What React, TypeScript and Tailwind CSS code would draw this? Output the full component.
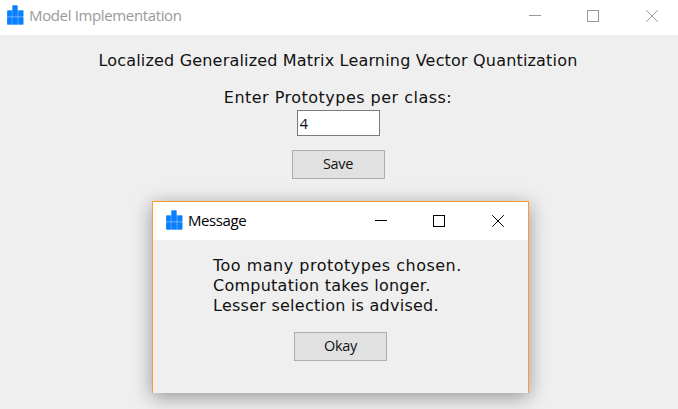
function BlocksIcon() {
  return (
    <svg width="18" height="20" viewBox="0 0 18 20" className="shrink-0" aria-hidden="true">
      <rect x="1" y="5.2" width="16.5" height="14.5" rx="1" fill="#7fbcff" />
      <rect x="6.3" y="0.2" width="5.4" height="11.2" rx="0.9" fill="#0a80ff" />
      <rect x="1.2" y="5.4" width="4.6" height="6" rx="0.6" fill="#0a80ff" />
      <rect x="12.3" y="5.4" width="5" height="6" rx="0.6" fill="#0a80ff" />
      <rect x="1.2" y="12.3" width="4.6" height="7.2" rx="0.6" fill="#0a80ff" />
      <rect x="6.3" y="12.3" width="5.4" height="7.2" rx="0.6" fill="#0a80ff" />
      <rect x="12.3" y="12.3" width="5" height="7.2" rx="0.6" fill="#0a80ff" />
    </svg>
  );
}

function WindowControls() {
  return (
    <svg width="130" height="12" viewBox="0 0 130 12" className="shrink-0" fill="none" stroke="currentColor" shapeRendering="crispEdges" aria-hidden="true">
      <path d="M0 5.5h12" />
      <rect x="58.5" y="0.5" width="11" height="11" />
      <path d="M117.2 0.2l11.6 11.6M128.8 0.2l-11.6 11.6" shapeRendering="auto" />
    </svg>
  );
}

function PushButton({ label }: { label: string }) {
  return (
    <button
      type="button"
      className="flex h-[29px] w-[93px] items-center justify-center border border-[#adadad] bg-[#e1e1e1] font-['Open_Sans',sans-serif] text-[14.5px] leading-none tracking-[-0.35px] text-[#111]"
    >
      {label}
    </button>
  );
}

function MessageDialog() {
  return (
    <section className="absolute top-[201px] left-[152px] h-[192px] w-[377px] border border-b-0 border-[#ff9a2b] bg-[#efefef] shadow-[0_4px_18px_0px_rgba(0,0,0,0.38)]">
      <header className="flex h-[38px] items-center bg-white pl-[12px] text-black">
        <div className="-mt-[2px]">
          <BlocksIcon />
        </div>
        <h2 className="-mt-[3px] ml-[5px] flex-1 font-['Open_Sans',sans-serif] text-[15px] leading-5 tracking-[-0.42px]">Message</h2>
        <div className="mr-[23px]">
          <WindowControls />
        </div>
      </header>
      <div className="flex flex-col items-center pt-[16px]">
        <div className="w-[255px] whitespace-nowrap text-left text-[16px] leading-5 text-[#111]">
          <p className="tracking-[0.5px]">Too many prototypes chosen.</p>
          <p className="tracking-[0.25px]">Computation takes longer.</p>
          <p className="tracking-[0.25px]">Lesser selection is advised.</p>
        </div>
        <div className="mt-[16px]">
          <PushButton label="Okay" />
        </div>
      </div>
    </section>
  );
}

export default function App() {
  return (
    <main className="relative h-[409px] w-[678px] overflow-hidden bg-[#efefef] font-['DejaVu_Sans',Verdana,sans-serif] text-[#111]">
      <header className="flex h-[35px] items-center bg-white pb-[3px] pl-[6px] text-[#999]">
        <div className="-mt-[2px]">
          <BlocksIcon />
        </div>
        <h1 className="-mt-[3px] ml-[5px] flex-1 font-['Open_Sans',sans-serif] text-[15px] leading-5 tracking-[-0.36px]">Model Implementation</h1>
        <div className="mr-[19px]">
          <WindowControls />
        </div>
      </header>
      <div className="flex flex-col items-center pt-[16px] pr-[2px]">
        <p className="whitespace-nowrap text-[16px] leading-5 tracking-[0.18px]">Localized Generalized Matrix Learning Vector Quantization</p>
        <label htmlFor="prototypes" className="mt-[17px] whitespace-nowrap text-[16px] leading-5 tracking-[0.48px]">
          Enter Prototypes per class:
        </label>
        <input
          id="prototypes"
          defaultValue="4"
          className="mt-[2px] h-[26px] w-[83px] border border-[#7a7a7a] bg-white px-[2px] font-['Open_Sans',sans-serif] text-[15px] leading-5 text-[#111] outline-none"
        />
        <div className="mt-[14px]">
          <PushButton label="Save" />
        </div>
      </div>
      <MessageDialog />
    </main>
  );
}
